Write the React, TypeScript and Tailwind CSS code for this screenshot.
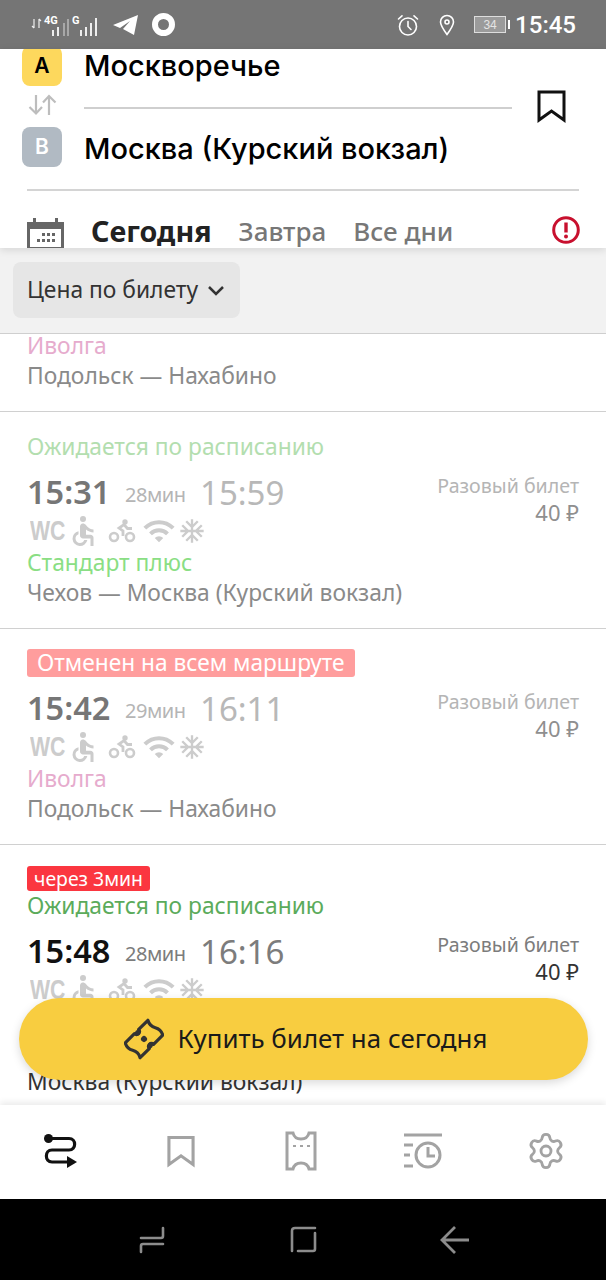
import { ReactNode } from "react";
import { MdAccessible, MdAcUnit, MdWifi } from "react-icons/md";
import { Settings } from "lucide-react";

const body = "font-['Noto_Sans',sans-serif]";

function Facilities() {
  return (
    <div className="flex h-[28px] items-center pl-[3px] text-[#cccccc]">
      <span className="w-[40px] origin-left scale-x-[0.76] font-['Liberation_Sans',sans-serif] text-[28px] leading-none font-bold">
        WC
      </span>
      <MdAccessible size={36} className="-ml-[5px]" />
      <svg width="28" height="24" viewBox="0 0 28 24" fill="none" stroke="#cccccc" className="ml-[7px]">
        <circle cx="6" cy="18" r="4" strokeWidth="2.600" />
        <circle cx="22" cy="18" r="4" strokeWidth="2.600" />
        <circle cx="17" cy="3" r="2.700" fill="#cccccc" stroke="none" />
        <path d="M15 17v-5l-4-3 5-3.500 3.500 4H24" strokeWidth="2.800" />
      </svg>
      <MdWifi size={34} className="ml-[6px]" />
      <MdAcUnit size={28} className="ml-[2px]" />
    </div>
  );
}

type CardProps = {
  top: ReactNode;
  dep: string;
  dur: string;
  arr: string;
  depColor: string;
  durColor: string;
  arrColor: string;
  ticketColor: string;
  priceColor: string;
  name: string;
  nameColor: string;
  route: ReactNode;
  routeColor: string;
};

function TrainCard(p: CardProps) {
  return (
    <div className="border-b border-[#d0d0d0] px-[27px] pt-[20px] pb-[20px]">
      {p.top}
      <div className="mt-[10px] flex justify-between">
        <div>
          <div className="flex h-[40px] items-center">
            <span className={`w-[98px] text-[32.5px] leading-none font-semibold ${p.depColor}`}>{p.dep}</span>
            <span className={`w-[75px] pt-[6px] text-[20px] leading-none tracking-[-0.5px] ${p.durColor}`}>{p.dur}</span>
            <span className={`text-[33px] leading-none ${p.arrColor}`}>{p.arr}</span>
          </div>
          <div className="mt-[5px]">
            <Facilities />
          </div>
        </div>
        <div className="mt-[1px] text-right">
          <div className={`text-[19.6px] leading-[26px] ${p.ticketColor}`}>Разовый билет</div>
          <div className={`text-[22px] leading-[27px] ${p.priceColor}`}>40 ₽</div>
        </div>
      </div>
      <div className={`mt-[3px] text-[22.8px] leading-[29px] ${p.nameColor}`}>{p.name}</div>
      <div className={`mt-[1px] text-[22.8px] leading-[30px] ${p.routeColor}`}>{p.route}</div>
    </div>
  );
}

function StatusBar() {
  return (
    <div className="flex h-[49px] shrink-0 items-center bg-[#757575] text-white">
      <div className="relative ml-[30px] h-[26px] w-[68px]">
        <svg width="68" height="26" viewBox="0 0 68 26" fill="none">
          <path d="M4 7v9M2 14l2 2M9 16V7M9 7l2 2" stroke="#eee" strokeWidth="1.200" />
          <rect x="22" y="18" width="2" height="6" fill="#eee" />
          <rect x="27" y="15" width="2" height="9" fill="#eee" />
          <rect x="33" y="11" width="2" height="13" fill="#a8a8a8" />
          <rect x="37" y="7" width="2" height="17" fill="#a8a8a8" />
          <rect x="50" y="18" width="2" height="6" fill="#eee" />
          <rect x="55" y="15" width="2" height="9" fill="#eee" />
          <rect x="60" y="11" width="2" height="13" fill="#eee" />
          <rect x="65" y="6" width="2" height="18" fill="#eee" />
        </svg>
        <span className="absolute top-[3px] left-[14px] font-['Roboto',sans-serif] text-[11px] leading-none font-bold">4G</span>
        <span className="absolute top-[3px] left-[42px] font-['Roboto',sans-serif] text-[11px] leading-none font-bold">G</span>
      </div>
      <svg width="26" height="22" viewBox="0 0 26 22" className="ml-[15px]" fill="#fff">
        <path d="M25 1 0 11l7 3 10-7-7 8 11 6z" />
      </svg>
      <div className="ml-[13px] h-[23px] w-[23px] rounded-full border-[6px] border-white" />
      <div className="flex-1" />
      <svg width="24" height="24" viewBox="0 0 24 24" fill="none" stroke="#fff" strokeWidth="1.600" strokeLinecap="round" className="mr-[19px]">
        <circle cx="12" cy="13.500" r="8.500" />
        <path d="M12 8.500v5l3 3M2.500 6 6 2.800M21.500 6 18 2.800" />
      </svg>
      <svg width="16" height="22" viewBox="0 0 16 22" fill="none" stroke="#fff" strokeWidth="1.600" className="mr-[19px]">
        <path d="M8 20.500C4 15 1.500 11.500 1.500 8a6.500 6.500 0 0 1 13 0c0 3.500-2.500 7-6.500 12.500z" />
        <circle cx="8" cy="8" r="2" />
      </svg>
      <div className="mr-[2px] flex h-[17px] w-[32px] items-center justify-center border border-[#ddd] bg-[#9b9b9b] font-['Liberation_Sans',sans-serif] text-[12px] leading-none text-[#e4e4e4]">
        34
      </div>
      <div className="mr-[5px] h-[9px] w-[2px] bg-white" />
      <span className="mr-[30px] font-['Roboto',sans-serif] text-[24px] leading-none font-medium">15:45</span>
    </div>
  );
}

function Header() {
  return (
    <div className="relative z-10 h-[199px] shrink-0 overflow-hidden bg-white shadow-[0_2px_8px_rgba(0,0,0,0.12)]">
      <div className="-mt-[3px] flex pl-[22px]">
        <div className="flex w-[40px] flex-col items-center">
          <div className="flex h-[40px] w-[40px] items-center justify-center rounded-[8px] bg-[#fdd85d] font-['Inter',sans-serif] text-[21px] font-semibold text-black">
            A
          </div>
          <svg width="32" height="24" viewBox="0 0 32 24" fill="none" stroke="#bdbdbd" strokeWidth="2.200" className="mt-[7px]">
            <path d="M10 2v18M3.500 14l6.500 6.500 6-6.500" />
            <path d="M23 22V3M17 9.500 23 3l6.500 6.500" />
          </svg>
          <div className="mt-[10px] flex h-[40px] w-[40px] items-center justify-center rounded-[8px] bg-[#b1bac3] font-['Inter',sans-serif] text-[21px] font-semibold text-white">
            B
          </div>
        </div>
        <div className="ml-[22px] flex-1">
          <div className="mt-[3px] h-[34px] font-['Inter',sans-serif] text-[29px] leading-[34px] font-medium text-black">Москворечье</div>
          <div className="mt-[7px] flex items-center">
            <div className="mt-[3px] h-[2px] w-[428px] bg-[#cfcfcf]" />
            <svg width="29" height="33" viewBox="0 0 29 33" fill="none" stroke="#111" strokeWidth="3" className="ml-[25px]">
              <path d="M2 2h25v28l-12.500-9L2 30z" />
            </svg>
          </div>
          <div className="mt-[6px] h-[40px] whitespace-nowrap font-['Inter',sans-serif] text-[29px] leading-[40px] font-medium text-black">
            Москва (Курский вокзал)
          </div>
        </div>
      </div>
      <div className="mx-[27px] mt-[20px] h-[2px] bg-[#d4d4d4]" />
      <div className={`mt-[21px] flex items-center pr-[26px] pl-[27px] ${body}`}>
        <svg width="37" height="32" viewBox="0 0 37 32" className="mt-[6px]" fill="#666">
          <path d="M0 4h6V0h3v4h19V0h3v4h6v28H0zM3 11v18h31V11z" fillRule="evenodd" />
          <path d="M15 15h3v3h-3zM20 15h3v3h-3zM25 15h3v3h-3zM10 21h3v3h-3zM15 21h3v3h-3zM20 21h3v3h-3zM25 21h3v3h-3z" />
        </svg>
        <span className="ml-[27px] text-[28.7px] leading-[38px] font-bold text-[#222]">Сегодня</span>
        <span className="ml-[27px] text-[26px] leading-[38px] font-medium text-[#777]">Завтра</span>
        <span className="ml-[27px] text-[26px] leading-[38px] font-medium text-[#777]">Все дни</span>
        <div className="flex-1" />
        <svg width="28" height="28" viewBox="0 0 28 28" fill="none" className="-mt-[2px]">
          <circle cx="14" cy="14" r="12.300" stroke="#c8102e" strokeWidth="3" />
          <path d="M14 6.500v10" stroke="#c8102e" strokeWidth="3.400" />
          <circle cx="14" cy="20.500" r="2" fill="#c8102e" />
        </svg>
      </div>
    </div>
  );
}

function FilterBar() {
  return (
    <div className={`flex h-[86px] shrink-0 items-center border-b border-[#cfcfcf] bg-[#f2f2f2] pl-[13px] ${body}`}>
      <div className="-mt-[1px] flex h-[56px] w-[227px] items-center rounded-[8px] bg-[#e6e6e6] pl-[14px] text-[22.8px] text-[#333]">
        <span>Цена по билету</span>
        <svg width="18" height="11" viewBox="0 0 18 11" fill="none" stroke="#333" strokeWidth="2.500" className="ml-[9px]">
          <path d="m2 2 7 7 7-7" />
        </svg>
      </div>
    </div>
  );
}

function BuyButton() {
  return (
    <div className={`absolute top-[998px] left-[19px] flex h-[82px] w-[569px] items-center justify-center rounded-full bg-[#f8cd40] pl-[4px] shadow-[0_3px_10px_rgba(0,0,0,0.15)] ${body}`}>
      <svg width="40" height="42" viewBox="-20 -21 40 42" fill="none" stroke="#333" strokeWidth="3.200" strokeLinejoin="round">
        <g transform="rotate(-45)">
          <path d="M-16-10.500H-3a3 3 0 0 0 6 0H16q-3 5.250 0 10.500t0 10.500H3a3 3 0 0 0-6 0H-16q3-5.250 0-10.500t0-10.500z" />
          <circle r="3" fill="#333" stroke="none" />
          <circle cy="-9" r="2.600" fill="#333" stroke="none" />
          <circle cy="9" r="2.600" fill="#333" stroke="none" />
        </g>
      </svg>
      <span className="ml-[14px] text-[25.9px] leading-none text-[#1a1a1a]">Купить билет на сегодня</span>
    </div>
  );
}

function TabBar() {
  return (
    <div className="relative z-10 flex h-[94px] shrink-0 items-center justify-between bg-white pr-[40px] pb-[2px] pl-[43px] shadow-[0_-3px_6px_rgba(0,0,0,0.08)]">
      <svg width="36" height="36" viewBox="0 0 36 36" fill="none" stroke="#111" strokeWidth="3.200">
        <circle cx="5.500" cy="5.500" r="4.500" fill="#111" stroke="none" />
        <path d="M5 5.500h21c7.500 0 7.500 11.500 0 11.500H9c-7.500 0-7.500 12 0 12h19" />
        <path d="M24 23v12l10-6z" fill="#111" stroke="none" />
      </svg>
      <svg width="28" height="33" viewBox="0 0 29 33" fill="none" stroke="#a3a3a3" strokeWidth="3.200" className="ml-[4px]">
        <path d="M2 2h25v28l-12.500-9L2 30z" />
      </svg>
      <svg width="32" height="40" viewBox="0 0 32 40" fill="none" stroke="#a3a3a3" strokeWidth="3" className="ml-[5px]">
        <path d="M2 2h6c1 4 4 6 8 6s7-2 8-6h6v36h-6c-1-4-4-6-8-6s-7 2-8 6H2z" />
        <path d="M8 15h3M15 15h3M22 15h3" strokeWidth="2" />
      </svg>
      <svg width="38" height="36" viewBox="0 0 38 36" fill="none" stroke="#a3a3a3" strokeWidth="3" className="ml-[3px]">
        <path d="M0 2h38M0 12h9M0 22h6M0 33h9" />
        <circle cx="24" cy="22" r="12" />
        <path d="M24 14v9h7" />
      </svg>
      <Settings size={40} color="#a3a3a3" strokeWidth={1.700} />
    </div>
  );
}

function NavBar() {
  return (
    <div className="flex h-[81px] shrink-0 items-center bg-black pl-[139px]">
      <svg width="26" height="28" viewBox="0 0 26 28" fill="none" stroke="#8c8c8c" strokeWidth="2.600" strokeLinecap="round">
        <path d="M24 2v8c0 1-.5 2-2 2H2" />
        <path d="M24 18H4c-1.500 0-2 1-2 2v6" />
      </svg>
      <svg width="27" height="27" viewBox="0 0 27 27" fill="none" stroke="#8c8c8c" strokeWidth="2.600" strokeLinecap="round" className="ml-[125px]">
        <path d="M25 2H5C3 2 2 3 2 5v20" />
        <path d="M8 25h15c1.500 0 2-1 2-2V7" />
      </svg>
      <svg width="30" height="30" viewBox="0 0 30 30" fill="none" stroke="#8c8c8c" strokeWidth="2.800" className="ml-[123px]">
        <path d="M15 2 2 15l13 13M2 15h27" />
      </svg>
    </div>
  );
}

export default function App() {
  return (
    <div className={`relative flex h-[1280px] w-[606px] flex-col overflow-hidden bg-white ${body}`}>
      <StatusBar />
      <Header />
      <FilterBar />
      <div className="min-h-0 flex-1 overflow-hidden bg-white">
        <div className="border-b border-[#d0d0d0] px-[27px] pb-[20px]">
          <div className="h-[24px] text-[22.8px] leading-[24px] text-[#e6abcd]">Иволга</div>
          <div className="mt-[3px] text-[22.8px] leading-[30px] text-[#8a8a8a]">Подольск — Нахабино</div>
        </div>
        <TrainCard
          top={<div className="text-[22.8px] leading-[30px] text-[#b3deaf]">Ожидается по расписанию</div>}
          dep="15:31" dur="28мин" arr="15:59"
          depColor="text-[#767676]" durColor="text-[#b5b5b5]" arrColor="text-[#b8b8b8]"
          ticketColor="text-[#b5b5b5]" priceColor="text-[#8f8f8f]"
          name="Стандарт плюс" nameColor="text-[#8ade84]"
          route="Чехов — Москва (Курский вокзал)" routeColor="text-[#8a8a8a]"
        />
        <TrainCard
          top={
            <div className="-mt-[1px] mb-[1px] flex h-[30px] items-center">
              <span className="rounded-[3px] bg-[#ff9d9d] px-[10px] text-[22.7px] leading-[28px] text-white">Отменен на всем маршруте</span>
            </div>
          }
          dep="15:42" dur="29мин" arr="16:11"
          depColor="text-[#767676]" durColor="text-[#b5b5b5]" arrColor="text-[#b8b8b8]"
          ticketColor="text-[#b5b5b5]" priceColor="text-[#8f8f8f]"
          name="Иволга" nameColor="text-[#e6abcd]"
          route="Подольск — Нахабино" routeColor="text-[#8a8a8a]"
        />
        <TrainCard
          top={
            <>
              <div className="mt-[1px] flex">
                <span className="rounded-[3px] bg-[#fb3640] px-[7px] text-[19.4px] leading-[25px] text-white">через 3мин</span>
              </div>
              <div className="text-[22.8px] leading-[30px] text-[#5bab5b]">Ожидается по расписанию</div>
            </>
          }
          dep="15:48" dur="28мин" arr="16:16"
          depColor="text-[#111]" durColor="text-[#7c7c7c]" arrColor="text-[#7c7c7c]"
          ticketColor="text-[#7c7c7c]" priceColor="text-[#333]"
          name="Стандарт плюс" nameColor="text-[#5bab5b]"
          route={<>Тула —<br />Москва (Курский вокзал)</>} routeColor="text-[#333]"
        />
      </div>
      <TabBar />
      <NavBar />
      <BuyButton />
    </div>
  );
}
